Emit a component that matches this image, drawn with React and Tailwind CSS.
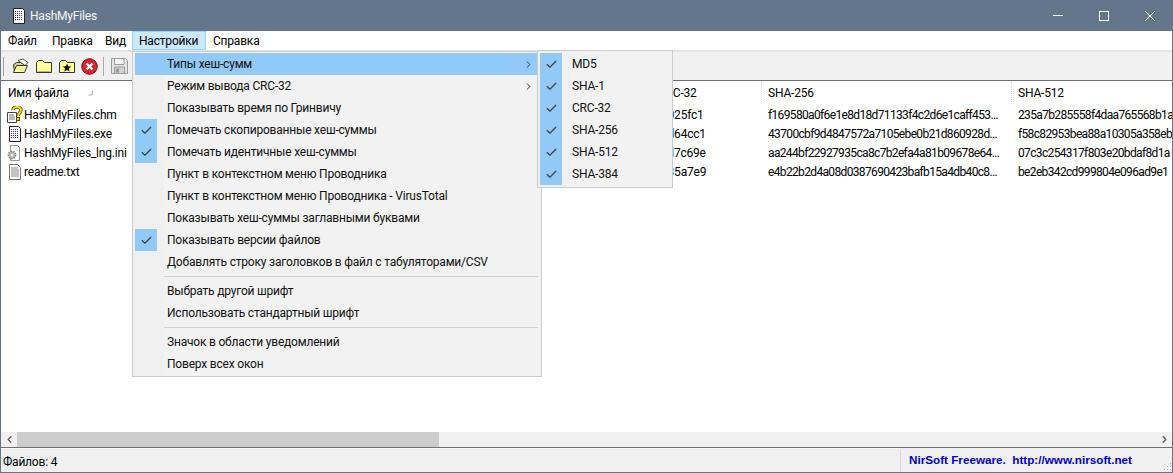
import { ChevronLeft, ChevronRight, Check } from 'lucide-react';

const uiFont = 'font-["Roboto",sans-serif]';

const topMenus = [
  { label: 'Файл', cls: 'w-[44px] pl-[7px]' },
  { label: 'Правка', cls: 'w-[53px] pl-[7px]' },
  { label: 'Вид', cls: 'w-[34px] pl-[7px]' },
  { label: 'Настройки', cls: 'w-[74px] pl-[6px] bg-[#cce8ff] border border-[#99d1ff]' },
  { label: 'Справка', cls: 'pl-[7px]' },
];

const settingsItems = [
  { label: 'Типы хеш-сумм', active: true, arrow: true },
  { label: 'Режим вывода CRC-32', arrow: true },
  { label: 'Показывать время по Гринвичу' },
  { label: 'Помечать скопированные хеш-суммы', checked: true },
  { label: 'Помечать идентичные хеш-суммы', checked: true },
  { label: 'Пункт в контекстном меню Проводника' },
  { label: 'Пункт в контекстном меню Проводника - VirusTotal' },
  { label: 'Показывать хеш-суммы заглавными буквами' },
  { label: 'Показывать версии файлов', checked: true },
  { label: 'Добавлять строку заголовков в файл с табуляторами/CSV' },
  { separator: true },
  { label: 'Выбрать другой шрифт' },
  { label: 'Использовать стандартный шрифт' },
  { separator: true },
  { label: 'Значок в области уведомлений' },
  { label: 'Поверх всех окон' },
];

const hashTypes = ['MD5', 'SHA-1', 'CRC-32', 'SHA-256', 'SHA-512', 'SHA-384'];

const files = [
  {
    name: 'HashMyFiles.chm',
    icon: 'chm',
    crc: '8025fc1',
    sha256: 'f169580a0f6e1e8d18d71133f4c2d6e1caff453...',
    sha512: '235a7b285558f4daa765568b1a',
  },
  {
    name: 'HashMyFiles.exe',
    icon: 'exe',
    crc: '3d64cc1',
    sha256: '43700cbf9d4847572a7105ebe0b21d860928d...',
    sha512: 'f58c82953bea88a10305a358eb',
  },
  {
    name: 'HashMyFiles_lng.ini',
    icon: 'ini',
    crc: 'ad7c69e',
    sha256: 'aa244bf22927935ca8c7b2efa4a81b09678e64...',
    sha512: '07c3c254317f803e20bdaf8d1a',
  },
  {
    name: 'readme.txt',
    icon: 'txt',
    crc: '535a7e9',
    sha256: 'e4b22b2d4a08d0387690423bafb15a4db40c8...',
    sha512: 'be2eb342cd999804e096ad9e1',
  },
];

function ExeIcon({ size = 16 }) {
  return (
    <svg width={size} height={size} viewBox="0 0 16 16">
      <path d="M2.5 0.5h9l2 2v13h-11z" fill="#fff" stroke="#222" />
      <path
        d="M4.5 3v10M6.5 3v10M8.5 3v10M10.5 3v10"
        stroke="#3a2a8c"
        strokeWidth="1"
        strokeDasharray="1 1"
      />
    </svg>
  );
}

function FileIcon({ type }) {
  if (type === 'exe') return <ExeIcon />;
  if (type === 'chm') {
    return (
      <svg width="17" height="17" viewBox="0 0 17 17">
        <path d="M1.5 6.5h9v10h-9z" fill="#fff" stroke="#444" />
        <path d="M3 9h5M3 11h6M3 13h6" stroke="#777" />
        <path
          d="M7 4c0-4 8-4 8 0 0 3-3 3-3 6"
          fill="none"
          stroke="#5a4a00"
          strokeWidth="3.4"
        />
        <path
          d="M7 4c0-4 8-4 8 0 0 3-3 3-3 6"
          fill="none"
          stroke="#f6d92c"
          strokeWidth="1.8"
        />
        <rect x="10.5" y="11.5" width="3" height="3" fill="#f6d92c" stroke="#5a4a00" />
      </svg>
    );
  }
  if (type === 'ini') {
    return (
      <svg width="17" height="16" viewBox="0 0 17 16">
        <path d="M4.5 0.5h7l2 2v13h-9z" fill="#fff" stroke="#999" />
        <circle cx="6" cy="10" r="3.6" fill="#bbb" stroke="#888" strokeDasharray="1.5 1" strokeWidth="1.6" />
        <circle cx="6" cy="10" r="1.2" fill="#eee" />
      </svg>
    );
  }
  return (
    <svg width="16" height="16" viewBox="0 0 16 16">
      <path d="M2.5 0.5h8l3 3v12h-11z" fill="#fff" stroke="#777" />
      <path d="M4 4h7M4 6h8M4 8h8M4 10h8M4 12h8" stroke="#8a8a8a" />
    </svg>
  );
}

function OpenFolderIcon() {
  return (
    <svg width="17" height="16" viewBox="0 0 17 16">
      <path d="M1.5 6.5l3-2h4l1 1h2v8h-9z" fill="#d8d28a" stroke="#333" />
      <path d="M6 2.5l5-1.5 5 3.5-3 3z" fill="#fff" stroke="#555" />
      <path d="M1.5 14.5l3-7h11l-3 7z" fill="#ffff99" stroke="#333" />
    </svg>
  );
}

function FolderIcon() {
  return (
    <svg width="16" height="15" viewBox="0 0 16 15">
      <path d="M0.5 3.5l2-2h4l2 2h7v10h-15z" fill="#ffff99" stroke="#333" />
      <path d="M1.5 12.5h13" stroke="#b8b860" />
    </svg>
  );
}

function StarFolderIcon() {
  return (
    <svg width="16" height="15" viewBox="0 0 16 15">
      <path d="M0.5 3.5l2-2h4l2 2h7v10h-15z" fill="#ffff99" stroke="#333" />
      <path d="M8 4.5l1.2 2.8 3 .2-2.3 2 .8 3-2.7-1.6-2.7 1.6.8-3-2.3-2 3-.2z" fill="#111" />
    </svg>
  );
}

function StopIcon() {
  return (
    <svg width="17" height="17" viewBox="0 0 17 17">
      <circle cx="8.5" cy="8.5" r="7.8" fill="#e01f2c" stroke="#7a1018" />
      <path d="M5.5 5.5l6 6M11.5 5.5l-6 6" stroke="#fff" strokeWidth="2.4" />
    </svg>
  );
}

function SaveIcon() {
  return (
    <svg width="17" height="16" viewBox="0 0 17 16">
      <path d="M0.5 0.5h14l2 2v13h-16z" fill="#e4e4e4" stroke="#9a9a9a" />
      <path d="M3.5 1v5.5h9.5v-5.5" fill="#f4f4f4" stroke="#9a9a9a" />
      <path d="M3.5 15v-6h10v6" fill="#d0d0d0" stroke="#9a9a9a" />
      <rect x="5" y="10.5" width="3" height="4" fill="#9a9a9a" />
    </svg>
  );
}

function MenuRow({ item }) {
  if (item.separator) {
    return (
      <div className="h-[7px] pl-[29px] pr-[1px] flex items-center">
        <div className="h-px w-full bg-[#d0d0d0]" />
      </div>
    );
  }
  return (
    <div className={`h-[22px] flex items-center ${item.active ? 'bg-[#91c9f7]' : ''}`}>
      <span
        className={`w-[22px] h-[22px] flex items-center justify-center ${
          item.checked ? 'bg-[#91c9f7]' : ''
        }`}
      >
        {item.checked && <Check size={13} strokeWidth={2.2} className="text-[#404040]" />}
      </span>
      <span className="ml-[10px] flex-1 whitespace-nowrap">{item.label}</span>
      {item.arrow && <ChevronRight size={11} strokeWidth={2} className="mr-[5px] text-[#333]" />}
    </div>
  );
}

export default function App() {
  return (
    <div
      className={`relative w-[1173px] h-[473px] overflow-hidden flex flex-col border border-t-0 border-[#64768c] bg-white text-[12px] tracking-[-0.2px] text-black ${uiFont}`}
    >
      {/* Title bar */}
      <div className="h-[31px] -mx-px bg-[#64768c] flex items-center shrink-0">
        <span className="ml-[11px]">
          <ExeIcon />
        </span>
        <span className="ml-[3px] text-[#f4f6f8]">HashMyFiles</span>
        <div className="ml-auto flex h-full text-white">
          <div className="w-[46px] flex items-center justify-center">
            <div className="w-[10px] h-px bg-white" />
          </div>
          <div className="w-[46px] flex items-center justify-center">
            <div className="w-[10px] h-[10px] border border-white" />
          </div>
          <div className="w-[46px] flex items-center justify-center">
            <svg width="10" height="10" viewBox="0 0 10 10">
              <path d="M0 0l10 10M10 0L0 10" stroke="#fff" strokeWidth="1" />
            </svg>
          </div>
        </div>
      </div>

      {/* Menu bar */}
      <div className="h-[19px] flex shrink-0 bg-white">
        {topMenus.map((m) => (
          <div key={m.label} className={`flex items-center ${m.cls}`}>
            {m.label}
          </div>
        ))}
      </div>

      {/* Toolbar */}
      <div className="h-[31px] shrink-0 bg-[#f0f0f0] border-t-2 border-[#e3e3e3] border-b border-b-[#707070] flex items-center pl-[2px]">
        <div className="w-[2px] h-[19px] border-l border-[#a0a0a0]" />
        <div className="ml-[7px] flex items-center">
          <OpenFolderIcon />
        </div>
        <div className="ml-[7px] flex items-center">
          <FolderIcon />
        </div>
        <div className="ml-[7px] flex items-center">
          <StarFolderIcon />
        </div>
        <div className="ml-[6px] flex items-center">
          <StopIcon />
        </div>
        <div className="ml-[5px] w-px h-[19px] bg-[#a8a8a8]" />
        <div className="ml-[7px] flex items-center">
          <SaveIcon />
        </div>
      </div>

      {/* File list */}
      <div className="flex-1 min-h-0 overflow-hidden bg-white">
        <div className="flex h-[24px] items-center">
          <div className="w-[647px] shrink-0 pl-[7px] flex items-center">
            <span>Имя файла</span>
            <svg width="6" height="6" viewBox="0 0 6 6" className="ml-[19px]">
              <path d="M4.5 0.5L4 5H0.5" fill="none" stroke="#aaa" />
            </svg>
          </div>
          <div className="w-[114px] shrink-0 pl-[10px] border-r border-dotted border-[#d8d8d8] h-[22px] flex items-center">
            CRC-32
          </div>
          <div className="w-[250px] shrink-0 pl-[6px] border-r border-dotted border-[#d8d8d8] h-[22px] flex items-center">
            SHA-256
          </div>
          <div className="pl-[6px]">SHA-512</div>
        </div>
        {files.map((f) => (
          <div key={f.name} className="flex h-[19px] items-center whitespace-nowrap">
            <div className="w-[647px] shrink-0 pl-[5px] flex items-center">
              <span className="w-[17px] flex justify-center">
                <FileIcon type={f.icon} />
              </span>
              <span className="ml-[1px]">{f.name}</span>
            </div>
            <div className="w-[114px] shrink-0 pl-[13px]">{f.crc}</div>
            <div className="w-[250px] shrink-0 pl-[6px] tracking-[-0.65px]">{f.sha256}</div>
            <div className="pl-[6px] tracking-[-0.65px]">{f.sha512}</div>
          </div>
        ))}
      </div>

      {/* Horizontal scrollbar */}
      <div className="h-[15px] shrink-0 bg-[#f0f0f0] flex items-center">
        <div className="w-[16px] flex justify-center">
          <ChevronLeft size={11} strokeWidth={3} className="text-[#606060]" />
        </div>
        <div className="w-[422px] h-full bg-[#cdcdcd]" />
        <div className="ml-auto w-[16px] flex justify-center">
          <ChevronRight size={11} strokeWidth={3} className="text-[#606060]" />
        </div>
      </div>

      {/* Status bar */}
      <div className="h-[25px] shrink-0 bg-[#f0f0f0] border-t border-[#707070] flex">
        <div className="flex-1 border-t border-[#fafafa] pl-[2px] pt-[4px]">Файлов: 4</div>
        <div className="relative w-[272px] border-l border-[#d4d4d4] mt-[2px] pb-[3px] pl-[8px] flex items-center whitespace-pre font-['Liberation_Sans',sans-serif] font-bold text-[11.7px] tracking-normal text-[#0000cc]">
          NirSoft Freeware.  http://www.nirsoft.net
          <svg width="10" height="10" viewBox="0 0 10 10" className="absolute right-0 bottom-0">
            <path d="M8 1h1v1H8zM5 4h1v1H5zM8 4h1v1H8zM2 7h1v1H2zM5 7h1v1H5zM8 7h1v1H8z" fill="#a8a8a8" />
          </svg>
        </div>
      </div>

      {/* Settings menu */}
      <div className="absolute left-[131px] top-[51px] w-[410px] h-[326px] border border-[#cccccc] px-[2px] py-[1px] bg-[linear-gradient(to_right,#f0f0f0_31px,#f2f2f2_31px)] text-[#111]">
        {settingsItems.map((item, i) => (
          <MenuRow key={i} item={item} />
        ))}
      </div>

      {/* Hash types submenu */}
      <div className="absolute left-[536px] top-[50px] w-[136px] h-[138px] border border-[#cccccc] px-[2px] py-[2px] bg-[linear-gradient(to_right,#f0f0f0_31px,#f2f2f2_31px)] text-[#111]">
        {hashTypes.map((label) => (
          <MenuRow key={label} item={{ label, checked: true }} />
        ))}
      </div>
    </div>
  );
}
